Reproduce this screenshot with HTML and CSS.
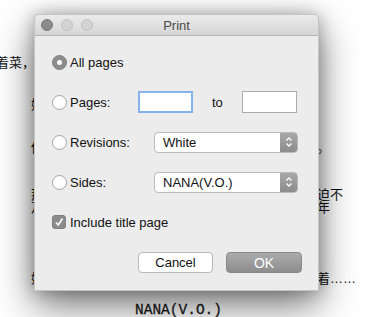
FILE: index.html
```html
<!DOCTYPE html>
<html lang="en">
<head>
	<meta charset="UTF-8">
	<title>Print</title>
	<link rel="stylesheet" href="styles.css">
</head>
<body>
	<div class="doc">
		<div class="ln l1">着菜，他们坐在桌边慢慢地吃着晚饭谁也</div>
		<div class="ln l2">她把碗放下看了看窗外的夜色街上的灯一盏</div>
		<div class="ln l3">他们之间的沉默比任何时候都要长仿佛时间在这里。</div>
		<div class="ln l4">那些年他们一起走过的路一起看过的风景如今都被迫不</div>
		<div class="ln l5">及待地收走了只剩下回忆里模糊的影子和那些说不年</div>
		<div class="ln l6">她低下头没有回答只是轻轻地把手里的杯子来回转着<span class="dots">……</span></div>
		<div class="ln name"><span class="typo">NANA</span>(V.O.)</div>
	</div>

	<div class="dialog">
		<div class="titlebar">
			<div class="lights">
				<span class="light dark"></span>
				<span class="light"></span>
				<span class="light"></span>
			</div>
			<div class="title">Print</div>
		</div>
		<div class="content">
			<div class="row">
				<span class="radio on"></span>
				<span class="lbl">All pages</span>
			</div>
			<div class="row">
				<span class="radio"></span>
				<span class="lbl short">Pages:</span>
				<span class="field focus"></span>
				<span class="to">to</span>
				<span class="field"></span>
			</div>
			<div class="row">
				<span class="radio"></span>
				<span class="lbl wide">Revisions:</span>
				<div class="popup">
					<span class="value">White</span>
					<span class="arrows">
						<svg width="8" height="12" viewBox="0 0 8 12"><path d="M1.5 4.5 L4 2 L6.5 4.5 M1.5 7.5 L4 10 L6.5 7.5" fill="none" stroke="#fff" stroke-width="1.3"/></svg>
					</span>
				</div>
			</div>
			<div class="row">
				<span class="radio"></span>
				<span class="lbl wide">Sides:</span>
				<div class="popup">
					<span class="value">NANA(V.O.)</span>
					<span class="arrows">
						<svg width="8" height="12" viewBox="0 0 8 12"><path d="M1.5 4.5 L4 2 L6.5 4.5 M1.5 7.5 L4 10 L6.5 7.5" fill="none" stroke="#fff" stroke-width="1.3"/></svg>
					</span>
				</div>
			</div>
			<div class="row">
				<span class="check">
					<svg width="10" height="10" viewBox="0 0 10 10"><path d="M2 5.5 L4.2 8 L8.5 1.5" fill="none" stroke="#fff" stroke-width="1.6"/></svg>
				</span>
				<span class="lbl">Include title page</span>
			</div>
			<div class="buttons">
				<button class="btn">Cancel</button>
				<button class="btn ok">OK</button>
			</div>
		</div>
	</div>
</body>
</html>
```

FILE: styles.css
```css
*{
	margin: 0;
	padding: 0;
	box-sizing: border-box;
}
body{
	width: 388px;
	height: 317px;
	overflow: hidden;
	background: #fff;
	position: relative;
	font-family: "Liberation Sans", Arial, sans-serif;
}

/* document behind the dialog */
.doc{
	font-family: "Noto Sans CJK SC", sans-serif;
	font-size: 13px;
	color: #111;
}
.ln{
	height: 13px;
	line-height: 13px;
	white-space: nowrap;
	padding-left: 31px;
}
.l1{
	margin-top: 55px;
	padding-left: 0;
	margin-left: -4px;
}
.l2{
	margin-top: 29px;
}
.l3{
	margin-top: 30px;
}
.l4{
	margin-top: 34px;
}
.l6{
	margin-top: 58px;
}
.dots{
	font-family: "Liberation Sans", Arial, sans-serif;
}
.name{
	margin-top: 19px;
	padding-left: 135px;
	font-family: "Liberation Mono", monospace;
	font-size: 14.5px;
	height: 15px;
	line-height: 15px;
	color: #1a1a1a;
	-webkit-text-stroke: 0.3px #1a1a1a;
}
.typo{
	border-bottom: 2px dotted #d42a2a;
}

/* dialog */
.dialog{
	position: absolute;
	left: 34px;
	top: 14px;
	width: 285px;
	height: 277px;
	background: #ececec;
	border: 1px solid #c4c4c4;
	border-radius: 5px 5px 0 0;
	box-shadow: 0 14px 38px rgba(0,0,0,0.55), 0 0 16px rgba(0,0,0,0.25);
	font-size: 13px;
	color: #111;
}
.titlebar{
	height: 21px;
	display: grid;
	grid-template-columns: 1fr auto 1fr;
	align-items: center;
	background: linear-gradient(#ebebeb, #d6d6d6);
	border-bottom: 1px solid #b3b3b3;
	border-radius: 5px 5px 0 0;
}
.lights{
	display: flex;
	gap: 8px;
	padding-left: 6px;
}
.light{
	width: 12px;
	height: 12px;
	border-radius: 50%;
	background: #d3d3d3;
	border: 1px solid #c2c2c2;
}
.light.dark{
	background: #8b8b8b;
	border-color: #7a7a7a;
}
.title{
	color: #4a4a4a;
	font-size: 13px;
}
.content{
	padding: 6px 16px 0 17px;
}
.row{
	height: 40px;
	display: flex;
	align-items: center;
}
.radio{
	width: 15px;
	height: 15px;
	border-radius: 50%;
	background: #fff;
	border: 1px solid #a3a3a3;
	display: flex;
	align-items: center;
	justify-content: center;
}
.radio.on{
	background: #8c8c8c;
	border-color: #828282;
}
.radio.on::after{
	content: "";
	width: 5px;
	height: 5px;
	border-radius: 50%;
	background: #fff;
}
.lbl{
	margin-left: 3px;
}
.lbl.short{
	width: 68px;
}
.lbl.wide{
	width: 84px;
}
.field{
	width: 55px;
	height: 22px;
	background: #fff;
	border: 1px solid #acacac;
}
.field.focus{
	border: 2px solid #86b3ea;
}
.to{
	width: 49px;
	padding-left: 19px;
}
.popup{
	width: 144px;
	height: 21px;
	display: flex;
	background: #fff;
	border: 1px solid #bababa;
	border-radius: 4px;
	overflow: hidden;
}
.value{
	flex: 1;
	padding-left: 8px;
	line-height: 19px;
}
.arrows{
	width: 17px;
	display: flex;
	align-items: center;
	justify-content: center;
	background: linear-gradient(#a7a7a7, #8c8c8c);
}
.check{
	width: 14px;
	height: 14px;
	margin-right: 1px;
	border-radius: 3px;
	background: #8c8c8c;
	border: 1px solid #7f7f7f;
	display: flex;
	align-items: center;
	justify-content: center;
}
.buttons{
	display: flex;
	justify-content: flex-end;
	gap: 13px;
	margin-top: 10px;
}
.btn{
	width: 75px;
	height: 21px;
	font-family: "Liberation Sans", Arial, sans-serif;
	font-size: 13px;
	color: #111;
	background: #fff;
	border: 1px solid #b8b8b8;
	border-radius: 4px;
}
.btn.ok{
	width: 76px;
	color: #fff;
	font-size: 14px;
	background: linear-gradient(#ababab, #8d8d8d);
	border-color: #8a8a8a;
}
```
